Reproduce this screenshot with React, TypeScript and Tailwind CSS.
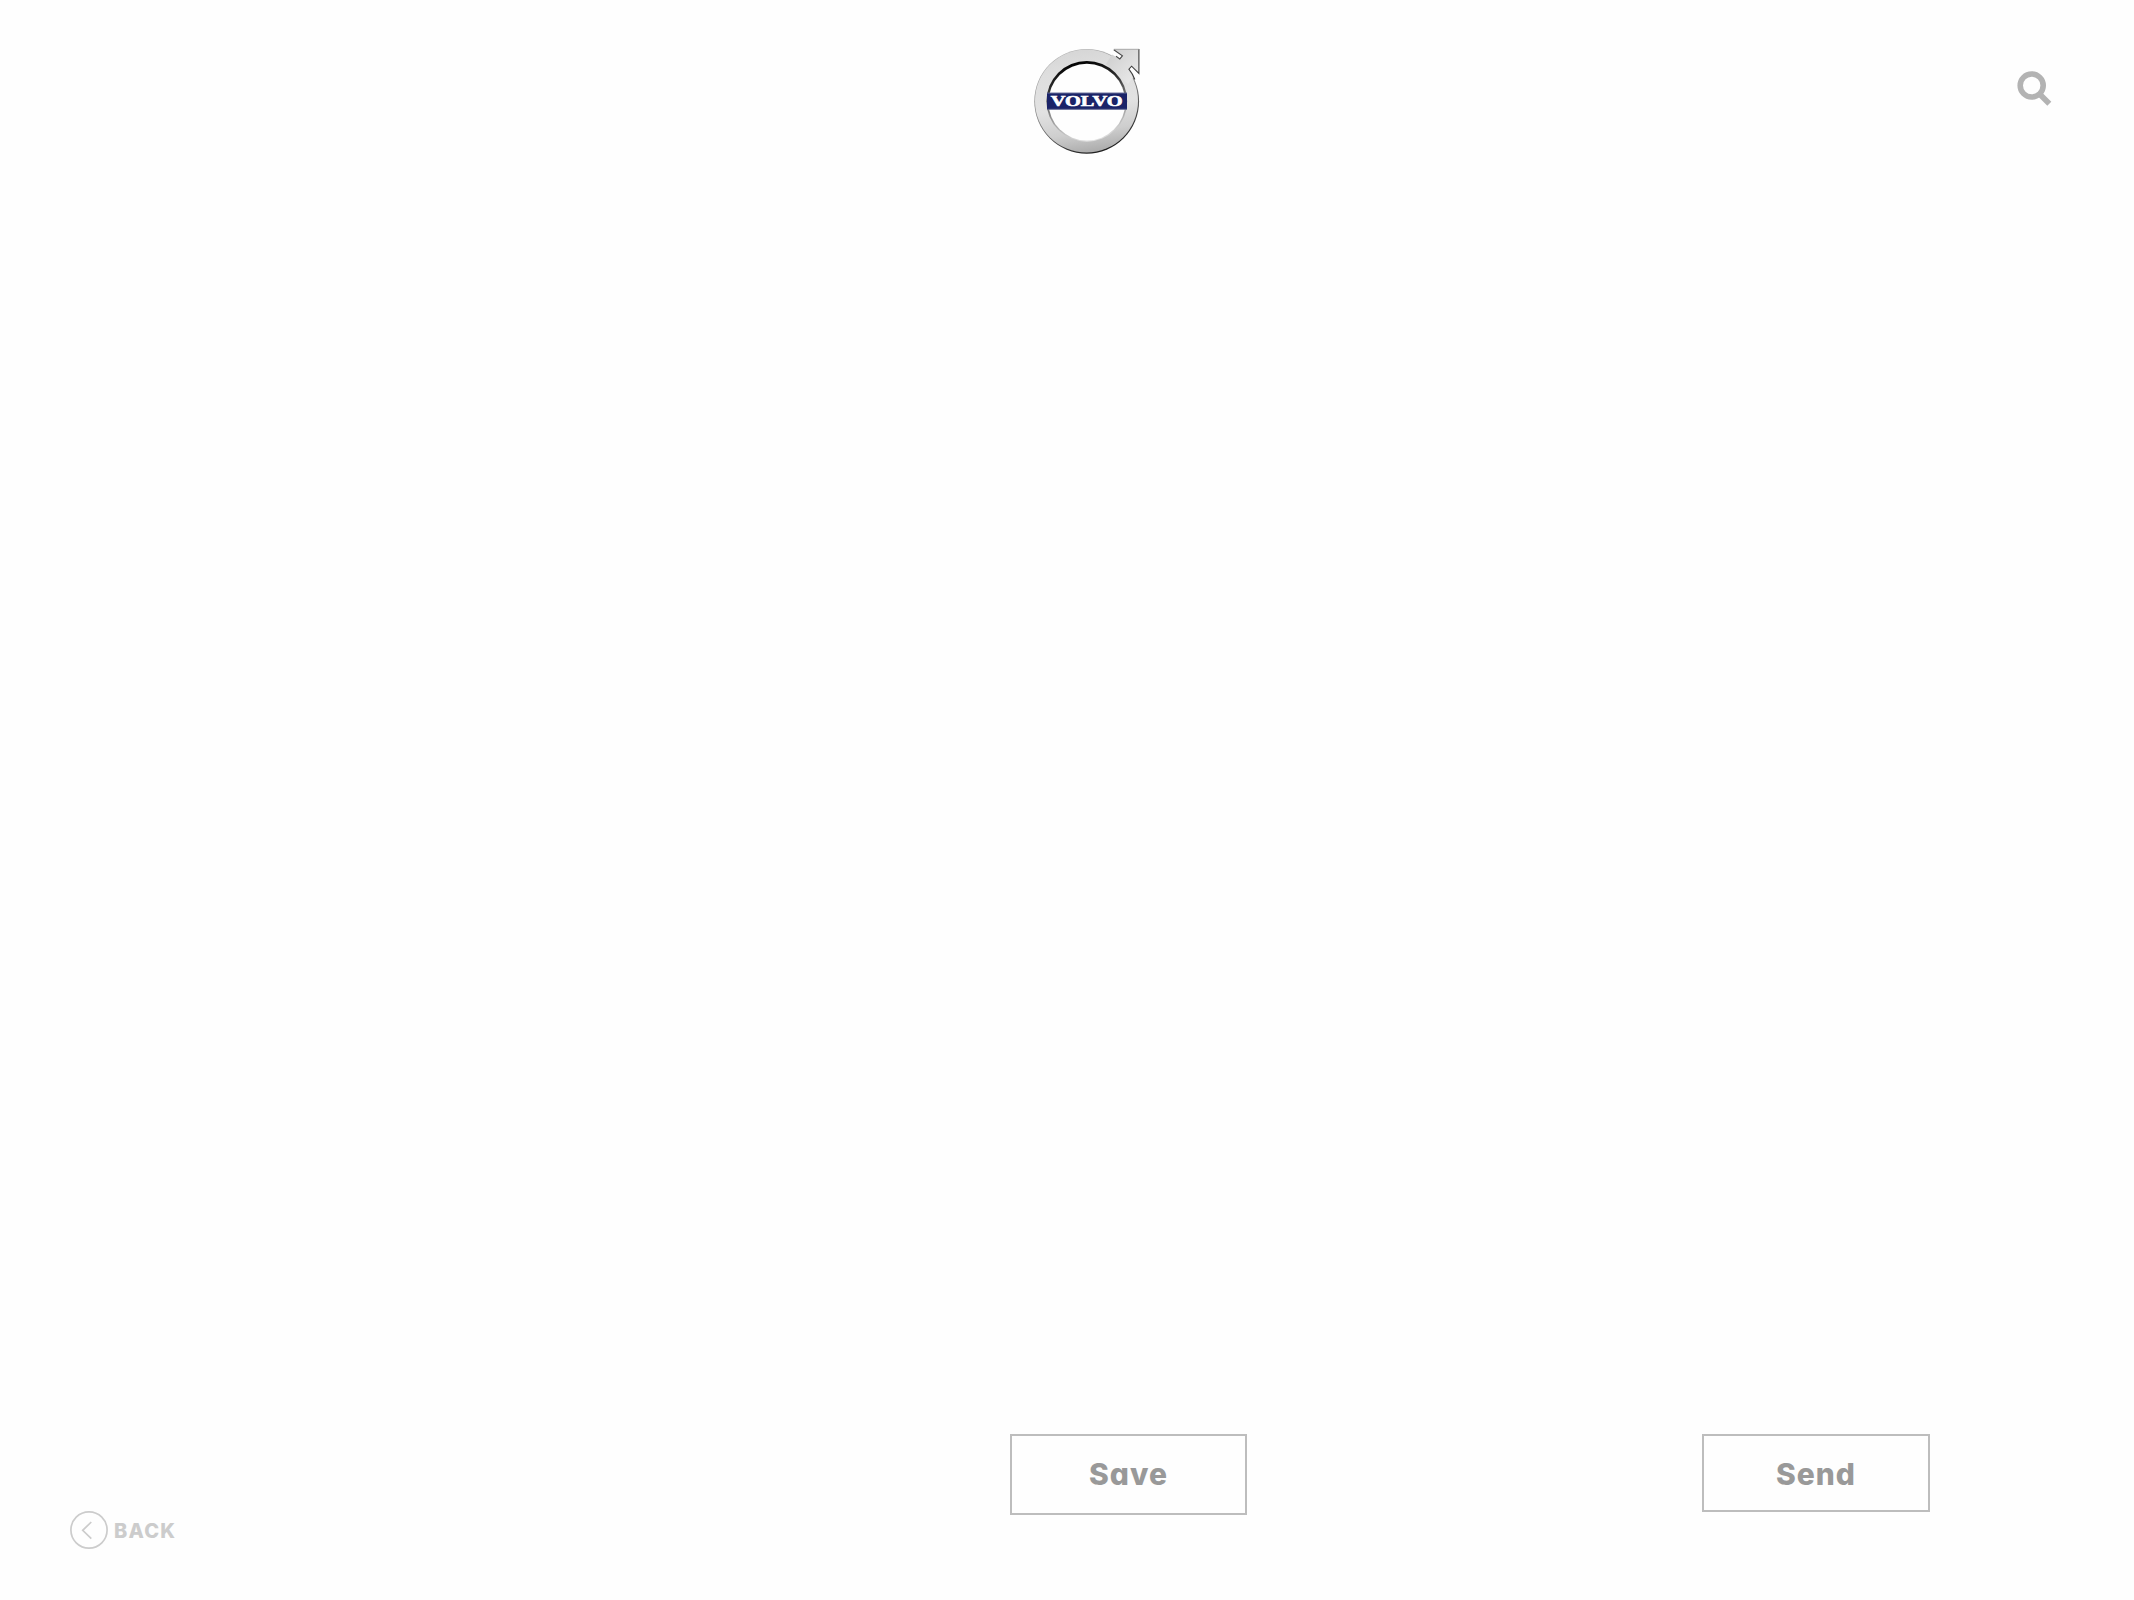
function VolvoLogo() {
  return (
    <svg className="block h-[124px] w-[124px]" viewBox="0 0 124 124" role="img" aria-label="Volvo">
      <defs>
        <linearGradient id="metal" x1="0.4" y1="0" x2="0.55" y2="1">
          <stop offset="0" stopColor="#d6d6d6" />
          <stop offset="0.2" stopColor="#dedede" />
          <stop offset="0.55" stopColor="#e2e2e2" />
          <stop offset="0.8" stopColor="#cecece" />
          <stop offset="1" stopColor="#ababab" />
        </linearGradient>
        <linearGradient id="edge" x1="0.2" y1="0" x2="0.6" y2="1">
          <stop offset="0" stopColor="#b8b8b8" />
          <stop offset="0.5" stopColor="#858585" />
          <stop offset="1" stopColor="#1c1c1c" />
        </linearGradient>
        <linearGradient id="bevel" x1="0.4" y1="0" x2="0.6" y2="1">
          <stop offset="0" stopColor="#000000" />
          <stop offset="0.25" stopColor="#2a2a2a" />
          <stop offset="0.6" stopColor="#909090" />
          <stop offset="1" stopColor="#e4e4e4" />
        </linearGradient>
        <linearGradient id="arrow" x1="0" y1="0" x2="1" y2="1">
          <stop offset="0" stopColor="#cccccc" />
          <stop offset="1" stopColor="#ececec" />
        </linearGradient>
      </defs>
      <circle cx="62.7" cy="61.3" r="52.4" fill="url(#edge)" />
      <circle cx="62.5" cy="61" r="51.5" fill="url(#metal)" />
      <path d="M88 14.5 L95.8 18.9 L98.4 15.9 L90 9.2 H115 V33.7 L107.6 26.2 L104.9 29.2 L110 36 L104 44 L82 24 Z" fill="url(#arrow)" />
      <path d="M89.8 9.8 L98.4 15.9 L95.8 18.9 L92 16.3" fill="none" stroke="#484848" strokeWidth="1.1" />
      <path d="M107.6 26.2 L104.9 29.2 Q108.4 33.5 110.8 39.5 L116 42 V34.5 Z" fill="#fefefe" />
      <path d="M114.9 9 V33.5 L107.6 26.2 L104.9 29.2 Q108.4 33.5 110.8 39.5" fill="none" stroke="#3d3d3d" strokeWidth="1.1" />
      <path d="M89.8 9.3 H115" fill="none" stroke="#999999" strokeWidth="0.8" />
      <circle cx="62.8" cy="61.3" r="40.4" fill="url(#bevel)" />
      <circle cx="62.9" cy="62.2" r="38.4" fill="#fefefe" />
      <rect x="23" y="52.8" width="80" height="16.8" fill="#1a2368" />
      <path d="M23 53.1 H103 M23 69.3 H103" stroke="#777d9f" strokeWidth="0.7" />
      <text
        x="26.7"
        y="65.8"
        textLength="72"
        lengthAdjust="spacingAndGlyphs"
        fill="#ffffff"
        stroke="#ffffff"
        strokeWidth="0.6"
        fontFamily="'Liberation Serif', serif"
        fontWeight="700"
        fontSize="14"
      >
        VOLVO
      </text>
    </svg>
  );
}

export default function App() {
  return (
    <div className="flex h-[1600px] w-[2134px] flex-col justify-between overflow-hidden bg-[#fefefe] font-['Inter',sans-serif] font-extrabold">
      <header className="grid grid-cols-[1024px_124px_1fr] pt-10">
        <div />
        <VolvoLogo />
        <button className="mt-5 mr-[70px] h-[60px] w-[60px] justify-self-end" aria-label="Search">
          <svg viewBox="0 0 60 60" fill="none" stroke="#b3b3b3" strokeWidth="5.6">
            <circle cx="27.7" cy="25.5" r="11.5" />
            <path d="M35.3 33.7 L45.3 43.8" />
          </svg>
        </button>
      </header>
      <footer className="flex h-[166px] items-start text-[30px] leading-none text-[#999999]">
        <button className="mt-[77px] ml-[70px] flex h-[38px] w-[940px] items-center text-[20px] tracking-[1.2px] text-[#cccccc]">
          <svg className="h-[38px] w-[38px]" viewBox="0 0 38 38" fill="none" stroke="#cccccc" strokeWidth="1.7">
            <circle cx="19" cy="19" r="18.1" />
            <path d="M21.3 11 L12.7 19.3 L21.3 27.7" />
          </svg>
          <span className="ml-[6px] pt-px">BACK</span>
        </button>
        <button className="h-[81px] w-[237px] border-2 border-[#bdbdbd] pb-0.5 tracking-[1px] [font-feature-settings:'cv11']">
          Save
        </button>
        <button className="ml-[455px] h-[78px] w-[228px] border-2 border-[#bdbdbd] pt-px tracking-[1px]">Send</button>
      </footer>
    </div>
  );
}
